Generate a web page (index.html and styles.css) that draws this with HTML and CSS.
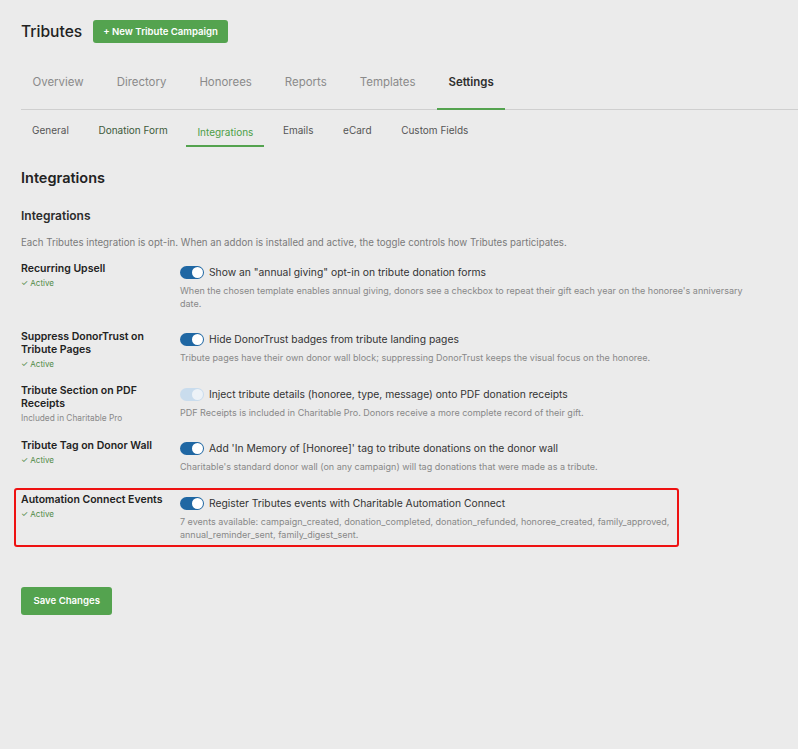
FILE: index.html
```html
<!DOCTYPE html>
<html lang="en">
<head>
    <meta charset="UTF-8">
    <title>Tributes Settings</title>
    <link rel="stylesheet" href="styles.css">
</head>
<body>
    <div class="wrap">
        <div class="page-head">
            <h1>Tributes</h1>
            <button class="btn">+ New Tribute Campaign</button>
        </div>

        <nav class="tabs">
            <a>Overview</a>
            <a>Directory</a>
            <a>Honorees</a>
            <a>Reports</a>
            <a>Templates</a>
            <a class="active">Settings</a>
        </nav>

        <nav class="subtabs">
            <a>General</a>
            <a class="dark">Donation Form</a>
            <a class="active">Integrations</a>
            <a>Emails</a>
            <a>eCard</a>
            <a>Custom Fields</a>
        </nav>

        <h2>Integrations</h2>
        <h3>Integrations</h3>
        <p class="intro">Each Tributes integration is opt-in. When an addon is installed and active, the toggle controls how Tributes participates.</p>

        <div class="form-table">
            <div class="row">
                <div class="label">
                    <strong>Recurring Upsell</strong>
                    <span class="status">✓ Active</span>
                </div>
                <div class="field">
                    <label class="toggle"><span class="switch"></span>Show an "annual giving" opt-in on tribute donation forms</label>
                    <p class="desc">When the chosen template enables annual giving, donors see a checkbox to repeat their gift each year on the honoree's anniversary date.</p>
                </div>
            </div>

            <div class="row">
                <div class="label">
                    <strong>Suppress DonorTrust on Tribute Pages</strong>
                    <span class="status">✓ Active</span>
                </div>
                <div class="field">
                    <label class="toggle"><span class="switch"></span>Hide DonorTrust badges from tribute landing pages</label>
                    <p class="desc">Tribute pages have their own donor wall block; suppressing DonorTrust keeps the visual focus on the honoree.</p>
                </div>
            </div>

            <div class="row">
                <div class="label">
                    <strong>Tribute Section on PDF Receipts</strong>
                    <span class="note">Included in Charitable Pro</span>
                </div>
                <div class="field">
                    <label class="toggle"><span class="switch off"></span>Inject tribute details (honoree, type, message) onto PDF donation receipts</label>
                    <p class="desc">PDF Receipts is included in Charitable Pro. Donors receive a more complete record of their gift.</p>
                </div>
            </div>

            <div class="row">
                <div class="label">
                    <strong>Tribute Tag on Donor Wall</strong>
                    <span class="status">✓ Active</span>
                </div>
                <div class="field">
                    <label class="toggle"><span class="switch"></span>Add 'In Memory of [Honoree]' tag to tribute donations on the donor wall</label>
                    <p class="desc">Charitable's standard donor wall (on any campaign) will tag donations that were made as a tribute.</p>
                </div>
            </div>

            <div class="row highlight">
                <div class="label">
                    <strong>Automation Connect Events</strong>
                    <span class="status">✓ Active</span>
                </div>
                <div class="field">
                    <label class="toggle"><span class="switch"></span>Register Tributes events with Charitable Automation Connect</label>
                    <p class="desc">7 events available: campaign_created, donation_completed, donation_refunded, honoree_created, family_approved, annual_reminder_sent, family_digest_sent.</p>
                </div>
            </div>
        </div>

        <button class="btn save">Save Changes</button>
    </div>
</body>
</html>
```

FILE: styles.css
```css
body {
    font-family: Inter, "Noto Sans", sans-serif;
    background-color: #ebebeb;
    color: #2c2c2c;
    margin: 0;
    padding: 0;
}

.wrap {
    padding: 20px 0 0 21px;
}

.page-head {
    display: flex;
    align-items: center;
    gap: 11px;
}

h1 {
    margin: 0;
    font-size: 15.6px;
    font-weight: 500;
    color: #222;
}

.btn {
    background-color: #54a34f; /* Green */
    color: #fff;
    border: none;
    border-radius: 3px;
    font-family: inherit;
    font-size: 9.6px;
    font-weight: 600;
    padding: 0 10px;
    height: 23px;
}

.tabs {
    display: flex;
    margin-top: 26px;
    border-bottom: 1px solid #cfcfcf;
}

.tabs a {
    font-size: 11.45px;
    color: #8a8a8a;
    padding: 6px 11.5px 19px;
    margin-right: 10px;
    border-bottom: 2px solid transparent;
    margin-bottom: -1px;
}

.tabs a.active {
    color: #2f2f2f;
    font-weight: 600;
    border-bottom-color: #54a34f;
}

.subtabs {
    display: flex;
    margin-top: 12px;
}

.subtabs a {
    font-size: 10px;
    color: #555;
    padding: 2px 11px 9px;
    margin-right: 7.6px;
    border-bottom: 2px solid transparent;
}

.subtabs a.dark {
    color: #3c5a3a;
}

.subtabs a.active {
    color: #4c9e47;
    border-bottom-color: #54a34f;
    padding-top: 4px;
    padding-bottom: 6px;
}

h2 {
    font-size: 14.5px;
    font-weight: 600;
    margin: 22px 0 0;
    color: #222;
}

h3 {
    font-size: 12px;
    font-weight: 600;
    margin: 22px 0 0;
    color: #2c2c2c;
}

.intro {
    font-size: 9.7px;
    color: #7a7a7a;
    margin: 14px 0 0;
}

.form-table {
    margin-top: 14px;
}

.row {
    display: flex;
    width: 745px;
}

.label {
    width: 159px;
    flex-shrink: 0;
    padding-bottom: 15px;
}

.label strong {
    display: block;
    font-size: 10.5px;
    font-weight: 600;
    line-height: 13px;
    color: #222;
    padding-right: 10px;
}

.status {
    display: block;
    font-size: 8px;
    line-height: 10px;
    color: #4f8a46;
    margin-top: 3px;
}

.note {
    display: block;
    font-size: 8.3px;
    line-height: 10px;
    color: #888;
    margin-top: 3px;
}

.field {
    flex: 1;
    padding: 3.5px 0 20px;
}

.toggle {
    display: flex;
    align-items: center;
    gap: 5px;
    font-size: 10.3px;
    line-height: 13px;
    color: #333;
}

.switch {
    position: relative;
    width: 24px;
    height: 13px;
    border-radius: 7px;
    background-color: #1f67a3; /* Blue */
    flex-shrink: 0;
}

.switch::after {
    content: "";
    position: absolute;
    right: 1px;
    top: 1px;
    width: 11px;
    height: 11px;
    border-radius: 50%;
    background-color: #fff;
}

.switch.off {
    background-color: #c9dced;
}

.switch.off::after {
    background-color: #edf2f7;
}

.desc {
    font-size: 9px;
    color: #888;
    line-height: 13px;
    margin: 5px 0 0;
    max-width: 578px;
}

.highlight {
    width: 651px;
    margin: -5px 0 0 -7px;
    padding: 3px 5px 0;
    border: 2px solid #ee1111; /* Red */
    border-radius: 3px;
}

.highlight .label,
.highlight .field {
    padding-bottom: 4px;
}

.save {
    display: block;
    margin-top: 40px;
    height: 28px;
    padding: 0 12.5px;
}
```
